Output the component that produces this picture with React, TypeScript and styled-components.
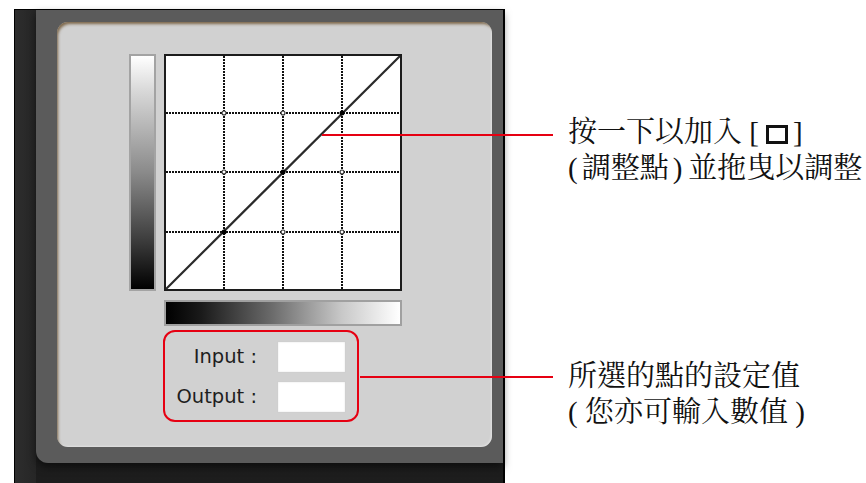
import React from "react";
import styled, { createGlobalStyle } from "styled-components";

const Global = createGlobalStyle`
  html, body { margin: 0; padding: 0; background: #fff; }
  #root { width: 866px; height: 483px; overflow: hidden; }
`;

const Page = styled.div`
  position: relative;
  display: flex;
  align-items: flex-start;
  box-sizing: border-box;
  width: 866px;
  height: 483px;
  padding: 9px 0 0 14px;
  overflow: hidden;
`;

const Window = styled.div`
  box-sizing: border-box;
  width: 491px;
  height: 474px;
  flex: none;
  display: grid;
  grid-template-columns: 21px 1fr;
  align-items: start;
  background: linear-gradient(to bottom, #232323 0%, #1d1d1d 100%);
  border-top: 1px solid #000;
  border-left: 1px solid #000;
  border-right: 2px solid #000;
`;

const SideStrip = styled.div`
  height: 473px;
  background: linear-gradient(to right, #2d2d2d, #262626);
`;

const Frame = styled.div`
  box-sizing: border-box;
  height: 453px;
  padding: 12px 11px 16px 21px;
  background: #5b5b5b;
  border-bottom-left-radius: 12px;
  box-shadow: 0 4px 8px rgba(0, 0, 0, 0.55);
`;

const Panel = styled.div`
  box-sizing: border-box;
  height: 425px;
  padding: 32px 0 0 72px;
  background: #d1d1d1;
  border-radius: 11px;
  box-shadow: inset 2px 3px 3px -1px rgba(110, 85, 50, 0.85),
    inset -1px -1px 2px rgba(255, 255, 255, 0.35);
  display: flex;
  align-items: flex-start;
  gap: 8px;
`;

const VBar = styled.div`
  box-sizing: border-box;
  width: 27px;
  height: 237px;
  border: 2px solid #a3a3a3;
  background: linear-gradient(to bottom, #ffffff 0%, #d8d8d8 15%, #8a8a8a 50%, #3a3a3a 80%, #000 100%);
`;

const Column = styled.div`
  display: flex;
  flex-direction: column;
  width: 238px;
`;

const GraphSvg = styled.svg`
  display: block;
  width: 238px;
  height: 237px;
`;

const HBar = styled.div`
  box-sizing: border-box;
  margin-top: 9px;
  height: 26px;
  border: 2px solid #a0a0a0;
  background: linear-gradient(to right, #000 0%, #1a1a1a 15%, #6a6a6a 45%, #c8c8c8 75%, #fff 100%);
`;

const Readout = styled.div`
  box-sizing: border-box;
  margin: 4px 0 0 -1px;
  width: 196px;
  height: 92px;
  padding: 9px 11px 7px 0;
  border: 2px solid #e60012;
  border-radius: 12px;
  display: grid;
  grid-template-columns: 92px 69px;
  grid-auto-rows: 32px;
  column-gap: 20px;
  row-gap: 8px;
`;

const Label = styled.div`
  font-family: "DejaVu Sans", sans-serif;
  font-size: 19.5px;
  color: #1e1e1e;
  text-align: right;
  line-height: 32px;
  white-space: nowrap;
`;

const Field = styled.div`
  box-sizing: border-box;
  background: #fff;
  border: 1px solid #cfcfcf;
  box-shadow: inset 0 0 2px rgba(0, 0, 0, 0.12);
`;

const Notes = styled.div`
  margin-left: 63px;
  padding-top: 105px;
  display: flex;
  flex-direction: column;
  gap: 172px;
`;

const Note = styled.div`
  font-family: "Liberation Serif", "Noto Serif CJK TC", "Noto Sans CJK TC", serif;
  font-size: 29px;
  line-height: 36px;
  color: #111;
  white-space: nowrap;
`;

const Paren = styled.span<{ $before?: number; $after?: number }>`
  margin-left: ${(p) => p.$before ?? 0}px;
  margin-right: ${(p) => p.$after ?? 0}px;
`;

const Box = styled.span`
  display: inline-block;
  box-sizing: border-box;
  width: 22px;
  height: 19px;
  margin: 0 5px 0 7px;
  border: 3.5px solid #111;
  vertical-align: -2px;
`;

const Leader = styled.div<{ $top: number; $left: number; $width: number }>`
  position: absolute;
  top: ${(p) => p.$top}px;
  left: ${(p) => p.$left}px;
  width: ${(p) => p.$width}px;
  height: 2px;
  background: #e60012;
`;

const gx = [60, 119, 178];
const gy = [59, 118, 178];

function Graph() {
  const points: { x: number; y: number; on: boolean }[] = [];
  gx.forEach((x, i) =>
    gy.forEach((y, j) => points.push({ x, y, on: i + j === 2 }))
  );
  return (
    <GraphSvg viewBox="0 0 238 237">
      <rect x="1" y="1" width="236" height="235" fill="#fff" stroke="#1c1c1c" strokeWidth="2" />
      {gx.map((x) => (
        <line key={"x" + x} x1={x} y1={2} x2={x} y2={235} stroke="#111" strokeWidth="2" strokeDasharray="2 1" shapeRendering="crispEdges" />
      ))}
      {gy.map((y) => (
        <line key={"y" + y} x1={2} y1={y} x2={236} y2={y} stroke="#111" strokeWidth="2" strokeDasharray="2 1" shapeRendering="crispEdges" />
      ))}
      <line x1="2" y1="235" x2="236" y2="2" stroke="#2a2a2a" strokeWidth="2.2" />
      {points.map((p, i) =>
        p.on ? (
          <circle key={i} cx={p.x} cy={p.y} r="2.5" fill="#000" />
        ) : (
          <circle key={i} cx={p.x} cy={p.y} r="2" fill="#fff" stroke="#333" strokeWidth="1.1" />
        )
      )}
    </GraphSvg>
  );
}

export default function App() {
  return (
    <>
      <Global />
      <Page>
        <Window>
          <SideStrip />
          <Frame>
            <Panel>
              <VBar />
              <Column>
                <Graph />
                <HBar />
                <Readout>
                  <Label>Input :</Label>
                  <Field />
                  <Label>Output :</Label>
                  <Field />
                </Readout>
              </Column>
            </Panel>
          </Frame>
        </Window>
        <Notes>
          <Note>
            按一下以加入 [<Box />]
            <br />
            <Paren $after={4}>(</Paren>調整點<Paren $before={4} $after={6}>)</Paren>並拖曳以調整
          </Note>
          <Note>
            所選的點的設定值
            <br />( 您亦可輸入數值 )
          </Note>
        </Notes>
        <Leader $top={134} $left={322} $width={231} />
        <Leader $top={376} $left={360} $width={193} />
      </Page>
    </>
  );
}
